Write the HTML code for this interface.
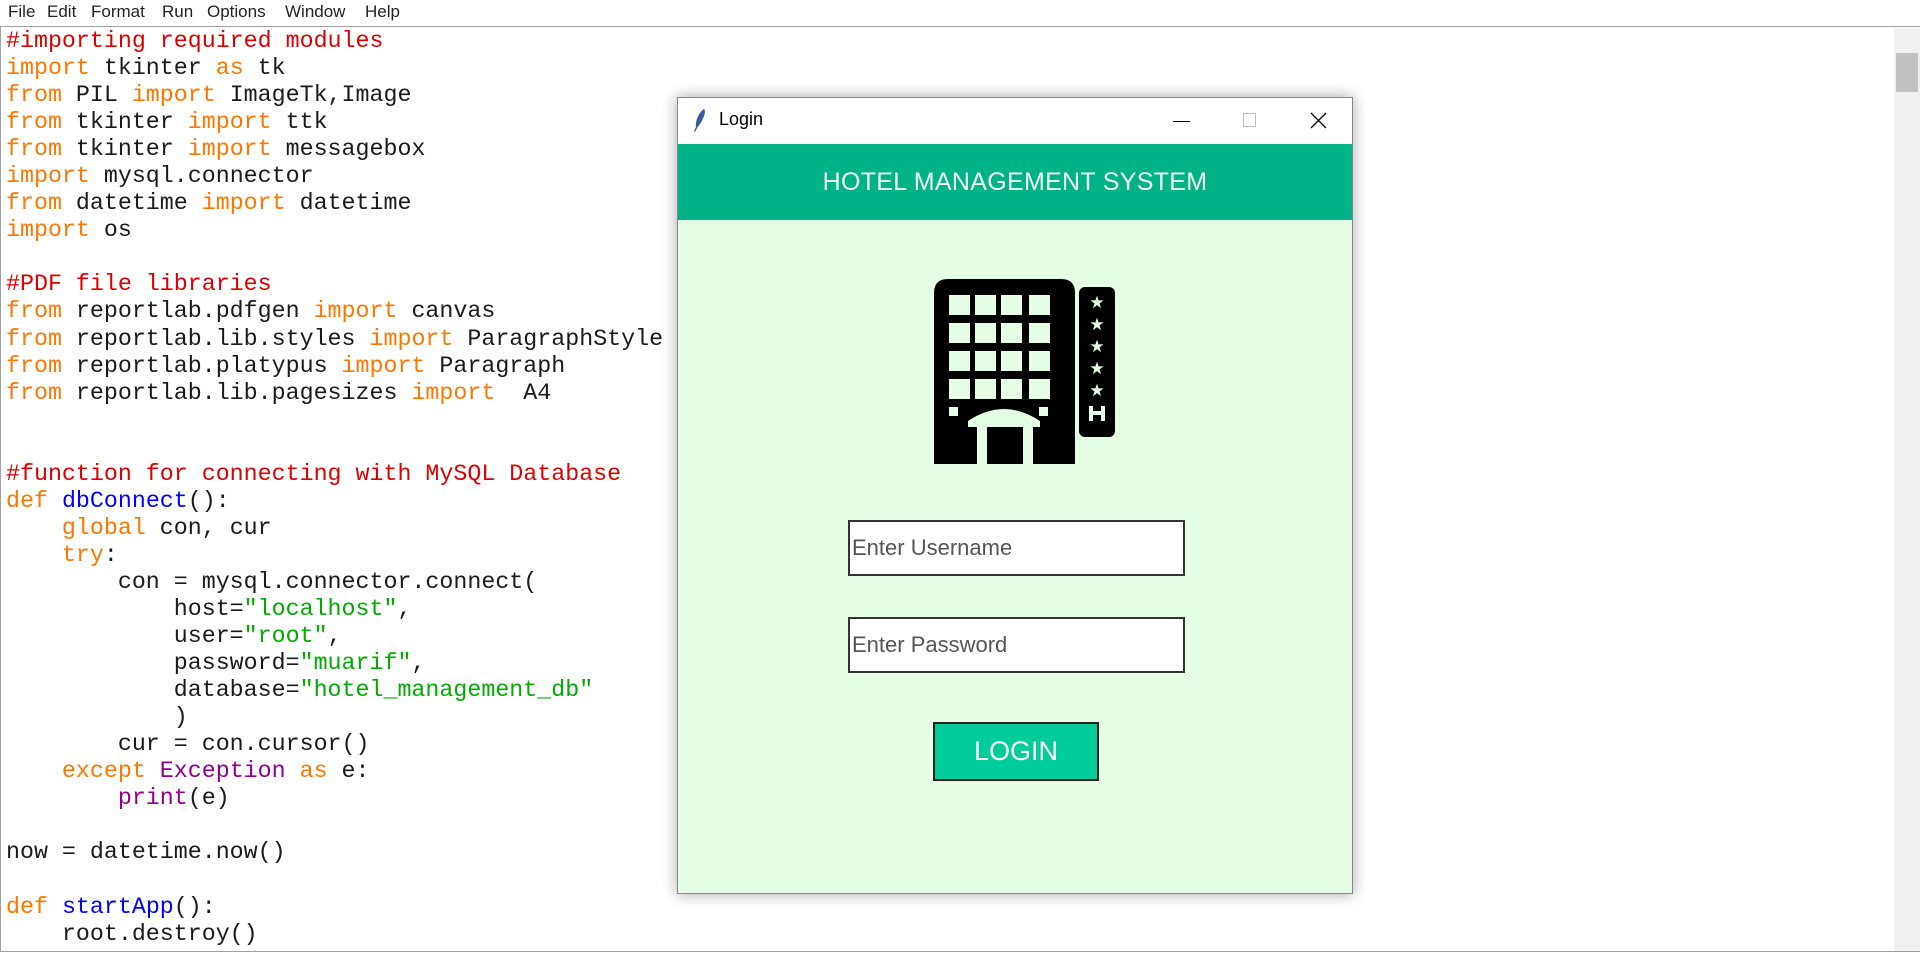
<!DOCTYPE html>
<html><head><meta charset="utf-8"><style>
*{margin:0;padding:0;box-sizing:border-box}
body{width:1920px;height:960px;background:#fff;position:relative;overflow:hidden;font-family:"Liberation Sans",sans-serif}
#menu{position:absolute;left:0;top:0;height:27px;width:1920px;border-bottom:1px solid #a0a0a0;font-size:17px;color:#222}
#menu span{position:absolute;top:2px}
#code{position:absolute;left:6px;top:28px;font-family:"Liberation Mono",monospace;font-size:23.3px;line-height:27.05px;white-space:pre;color:#1a1a1a}
.k{color:#ff7700}.c{color:#dd0000}.s{color:#00aa00}.d{color:#0000ff}.b{color:#900090}
#sb{position:absolute;left:1894px;top:28px;width:26px;height:923px;background:#f0f0f0}
#thumb{position:absolute;left:1896px;top:53px;width:22px;height:39px;background:#c1c1c1}
#bot{position:absolute;left:0;top:951px;width:1920px;height:9px;border-top:1px solid #a0a0a0;background:#fff}
#lb{position:absolute;left:0;top:27px;width:1px;height:924px;background:#a0a0a0}
#win{position:absolute;left:677px;top:97px;width:676px;height:797px;border:1px solid #888;background:#e5fce5;box-shadow:0 0 14px rgba(0,0,0,.35)}
#tb{position:absolute;left:0;top:0;width:674px;height:46px;background:#fff}
#hdr{position:absolute;left:0;top:46px;width:674px;height:76px;background:#00b386;color:#f0fff5;font-size:25px;text-align:center;line-height:76px;letter-spacing:.3px}
.inp{position:absolute;left:170px;width:337px;height:56px;border:2px solid #333;background:#fff;font-size:22px;color:#555;padding-left:2px;line-height:52px}
#btn{position:absolute;left:255px;top:624px;width:166px;height:59px;border:2px solid #222;background:#00cc99;color:#fff;font-size:27px;text-align:center;line-height:55px}
</style></head><body>
<div id="menu"><span style="left:8px">File</span><span style="left:47px">Edit</span><span style="left:91px">Format</span><span style="left:162px">Run</span><span style="left:207px">Options</span><span style="left:285px">Window</span><span style="left:365px">Help</span></div>
<div id="lb"></div>
<div id="code"><span class="c">#importing required modules</span>
<span class="k">import</span> tkinter <span class="k">as</span> tk
<span class="k">from</span> PIL <span class="k">import</span> ImageTk,Image
<span class="k">from</span> tkinter <span class="k">import</span> ttk
<span class="k">from</span> tkinter <span class="k">import</span> messagebox
<span class="k">import</span> mysql.connector
<span class="k">from</span> datetime <span class="k">import</span> datetime
<span class="k">import</span> os

<span class="c">#PDF file libraries</span>
<span class="k">from</span> reportlab.pdfgen <span class="k">import</span> canvas
<span class="k">from</span> reportlab.lib.styles <span class="k">import</span> ParagraphStyle
<span class="k">from</span> reportlab.platypus <span class="k">import</span> Paragraph
<span class="k">from</span> reportlab.lib.pagesizes <span class="k">import</span>  A4


<span class="c">#function for connecting with MySQL Database</span>
<span class="k">def</span> <span class="d">dbConnect</span>():
    <span class="k">global</span> con, cur
    <span class="k">try</span>:
        con = mysql.connector.connect(
            host=<span class="s">"localhost"</span>,
            user=<span class="s">"root"</span>,
            password=<span class="s">"muarif"</span>,
            database=<span class="s">"hotel_management_db"</span>
            )
        cur = con.cursor()
    <span class="k">except</span> <span class="b">Exception</span> <span class="k">as</span> e:
        <span class="b">print</span>(e)

now = datetime.now()

<span class="k">def</span> <span class="d">startApp</span>():
    root.destroy()</div>
<div id="sb"></div><div id="thumb"></div>
<div id="bot"></div>
<div id="win">
 <div id="tb">
  <svg style="position:absolute;left:14px;top:10px" width="16" height="26" viewBox="0 0 16 26"><path d="M12 1 C15 4 10 14 5 20 L3 24 L2 23 L4 19 C3 13 7 4 12 1Z" fill="#3a5a9a"/></svg>
  <span style="position:absolute;left:41px;top:11px;font-size:18px;color:#000">Login</span>
  <div style="position:absolute;left:495px;top:23px;width:17px;height:1px;background:#000"></div>
  <div style="position:absolute;left:565px;top:15px;width:13px;height:14px;border:1px solid #bbb"></div>
  <svg style="position:absolute;left:632px;top:14px" width="17" height="17"><path d="M1 1L16 16M16 1L1 16" stroke="#000" stroke-width="1.3"/></svg>
 </div>
 <div id="hdr">HOTEL MANAGEMENT SYSTEM</div>
 <svg style="position:absolute;left:256px;top:181px" width="181" height="186" viewBox="0 0 181 186">
  <path d="M0 185 V14 Q0 0 14 0 H127 Q141 0 141 14 V185 Z" fill="#000"/>
  <g fill="#e5fce5">
   <rect x="15" y="16" width="21" height="20"/><rect x="41" y="16" width="21" height="20"/><rect x="67" y="16" width="21" height="20"/><rect x="95" y="16" width="21" height="20"/>
   <rect x="15" y="44" width="21" height="20"/><rect x="41" y="44" width="21" height="20"/><rect x="67" y="44" width="21" height="20"/><rect x="95" y="44" width="21" height="20"/>
   <rect x="15" y="72" width="21" height="20"/><rect x="41" y="72" width="21" height="20"/><rect x="67" y="72" width="21" height="20"/><rect x="95" y="72" width="21" height="20"/>
   <rect x="15" y="100" width="21" height="20"/><rect x="41" y="100" width="21" height="20"/><rect x="67" y="100" width="21" height="20"/><rect x="95" y="100" width="21" height="20"/>
   <rect x="15" y="128" width="9" height="9"/><rect x="105" y="128" width="9" height="9"/>
   <path d="M34 142 Q70 118 106 142 V148 H99 V186 H89 V148 H53 V186 H43 V148 H34Z"/>
  </g>
  <rect x="145" y="8" width="36" height="150" rx="6" fill="#000"/>
  <g fill="#e5fce5" font-family="DejaVu Sans" font-size="17" text-anchor="middle">
   <text x="163" y="29">★</text><text x="163" y="51">★</text><text x="163" y="73">★</text><text x="163" y="95">★</text><text x="163" y="117">★</text>
   <path d="M155 127h4v5h8v-5h4v15h-4v-6h-8v6h-4z"/>
  </g>
 </svg>
 <div class="inp" style="top:422px">Enter Username</div>
 <div class="inp" style="top:519px">Enter Password</div>
 <div id="btn">LOGIN</div>
</div>
</body></html>
